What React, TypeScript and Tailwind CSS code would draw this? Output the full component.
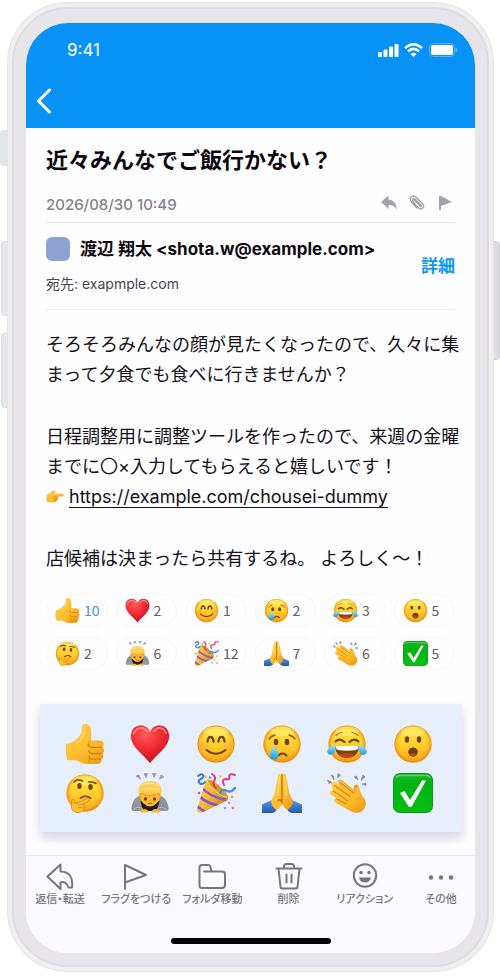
import React from "react";

type IconProps = { className?: string };

const FONT = "font-[Inter,'Noto_Sans_CJK_JP',sans-serif]";

/* Shared gradients used by every emoji drawing */
function EmojiDefs() {
  return (
    <svg className="absolute size-0" aria-hidden="true">
      <defs>
        <linearGradient id="face" x1="0" y1="0" x2="0" y2="1">
          <stop offset="0" stopColor="#ffe64f" />
          <stop offset="0.5" stopColor="#ffd02f" />
          <stop offset="1" stopColor="#f7a61b" />
        </linearGradient>
        <radialGradient id="rim" cx="0.5" cy="0.5" r="0.5">
          <stop offset="0.78" stopColor="#f08a0c" stopOpacity="0" />
          <stop offset="1" stopColor="#e97d08" stopOpacity="0.75" />
        </radialGradient>
        <linearGradient id="skin" x1="0" y1="0" x2="1" y2="1">
          <stop offset="0" stopColor="#ffcf4a" />
          <stop offset="0.6" stopColor="#fdbb2c" />
          <stop offset="1" stopColor="#ec9413" />
        </linearGradient>
        <radialGradient id="heart" cx="0.4" cy="0.25" r="0.75">
          <stop offset="0" stopColor="#ff5a5a" />
          <stop offset="0.55" stopColor="#ec2a32" />
          <stop offset="1" stopColor="#c8101c" />
        </radialGradient>
        <linearGradient id="tear" x1="0" y1="0" x2="0" y2="1">
          <stop offset="0" stopColor="#9fe3fb" />
          <stop offset="1" stopColor="#1b9be0" />
        </linearGradient>
        <linearGradient id="check" x1="0" y1="0" x2="0" y2="1">
          <stop offset="0" stopColor="#18b32b" />
          <stop offset="0.3" stopColor="#00b512" />
          <stop offset="1" stopColor="#05c00f" />
        </linearGradient>
        <linearGradient id="cone" x1="0" y1="0" x2="1" y2="0.4">
          <stop offset="0" stopColor="#f9d24c" />
          <stop offset="0.5" stopColor="#f3bb38" />
          <stop offset="1" stopColor="#c98a18" />
        </linearGradient>
        <linearGradient id="sleeve" x1="0" y1="0" x2="0" y2="1">
          <stop offset="0" stopColor="#5b9ae8" />
          <stop offset="1" stopColor="#2159a8" />
        </linearGradient>
        <clipPath id="coneClip">
          <path d="M10 7 Q13 5 19 9 L32 23 Q33 28 28 29 L6 39.500 Q.5 41 1 36 Z" />
        </clipPath>
      </defs>
    </svg>
  );
}

function Emoji({ className, children }: { className?: string; children: React.ReactNode }) {
  return (
    <svg viewBox="0 0 40 40" className={className} fill="none" aria-hidden="true">
      {children}
    </svg>
  );
}

function FaceBase() {
  return (
    <>
      <circle cx="20" cy="20" r="18.6" fill="url(#face)" />
      <circle cx="20" cy="20" r="18.6" fill="url(#rim)" />
      <ellipse cx="20" cy="7.5" rx="12" ry="5" fill="#fff27a" opacity="0.5" />
    </>
  );
}

function ThumbsUp({ className }: IconProps) {
  return (
    <Emoji className={className}>
      <path d="M1 20 Q6 19.5 10 16.5 Q15.500 12 17 8 V3 Q17.500 0 21 0 Q25 .5 26 5.500 Q26.800 10 25.500 16.500 H35 Q38.800 17 38.800 20 Q38.800 22 37.500 23 Q39.500 24.500 39 27 Q38.800 28.800 37.300 29.500 Q38.800 31 38.200 33 Q37.800 34.800 36 35.200 Q37 37 35.500 38.800 Q34.500 40 31 40 H21 Q16 39.500 12 36.500 L2 36 Q0 28 1 20Z" fill="url(#skin)" />
      <path d="M36.500 23.300 H26 Q23.500 23 23.500 20.500 M36.500 29.500 H26 Q23.800 29 24 26.500 M35.500 35.200 H26 Q23.800 34.800 24.300 32.500" stroke="#d08210" strokeWidth="1.3" strokeLinecap="round" />
      <path d="M25.500 16.500 Q22.500 17.500 22.800 21 M25 39.500 Q22.800 38.500 23.800 36" stroke="#dc9418" strokeWidth="1" strokeLinecap="round" />
      <path d="M19.500 3 V9 Q18 14 12 18.500" stroke="#ffe082" strokeWidth="1.600" strokeLinecap="round" opacity="0.7" />
    </Emoji>
  );
}

function Heart({ className }: IconProps) {
  return (
    <Emoji className={className}>
      <path d="M20 39 Q17.500 36 9 27.500 Q.8 19.500 .8 11.500 Q1.500 2 10.500 1.300 Q17.500 1.500 20 8 Q22.500 1.500 29.500 1.300 Q38.500 2 39.200 11.500 Q39.200 19.500 31 27.500 Q22.500 36 20 39Z" fill="url(#heart)" />
      <path d="M4 9.500 Q6 4 11 3.800 Q15 4 17 7.500 M24 7 Q26.500 3.800 29.500 3.800 Q34 4.200 36 9" stroke="#ff9c9c" strokeWidth="1.800" strokeLinecap="round" opacity="0.75" />
    </Emoji>
  );
}

function Smile({ className }: IconProps) {
  return (
    <Emoji className={className}>
      <FaceBase />
      <circle cx="8" cy="22.500" r="4" fill="#fb8a35" opacity="0.3" />
      <circle cx="32" cy="22.500" r="4" fill="#fb8a35" opacity="0.3" />
      <path d="M11.500 17.500 Q12.200 12.800 14.500 12.800 Q17 12.800 17.500 17.500 M22.500 17.500 Q23 12.800 25.500 12.800 Q28 12.800 28.500 17.500" stroke="#70430b" strokeWidth="2.300" strokeLinecap="round" />
      <path d="M10.500 26 Q20 33.500 29.500 26" stroke="#70430b" strokeWidth="2" strokeLinecap="round" />
    </Emoji>
  );
}

function Crying({ className }: IconProps) {
  return (
    <Emoji className={className}>
      <FaceBase />
      <ellipse cx="14" cy="18" rx="2.300" ry="3.300" fill="#70430b" />
      <ellipse cx="25" cy="18" rx="2.300" ry="3.300" fill="#70430b" />
      <path d="M7 15 Q9 12 13 11 M27 11 Q31 12 33 15" stroke="#94580b" strokeWidth="1.500" strokeLinecap="round" />
      <path d="M16.500 31.500 Q20.500 27.500 24.500 31.500" stroke="#70430b" strokeWidth="2" strokeLinecap="round" />
      <path d="M12 22 Q17 28.500 16.500 31.500 Q16 35.500 12 35.500 Q8 35.500 7.500 31.500 Q7.500 28 12 22Z" fill="url(#tear)" />
    </Emoji>
  );
}

function Joy({ className }: IconProps) {
  return (
    <Emoji className={className}>
      <FaceBase />
      <path d="M8.500 17.500 Q13 13.500 17.500 18 M22.500 18 Q27 13.500 31.500 17.500" stroke="#70430b" strokeWidth="2" strokeLinecap="round" />
      <path d="M9 11.500 Q12 8.500 15 8.500 M25 8.500 Q28 8.500 31 11.500" stroke="#b77413" strokeWidth="1.200" strokeLinecap="round" />
      <path d="M8 22 H32 Q31 34 20 34 Q9 34 8 22Z" fill="#7c420c" />
      <path d="M8.500 22 H31.500 Q31.200 25.500 29 26 Q20 27.500 11 26 Q8.800 25.500 8.500 22Z" fill="#fff" />
      <path d="M12.500 31 Q20 27.500 27.500 31 Q25 34 20 34 Q15 34 12.500 31Z" fill="#e5502c" opacity="0.6" />
      <path d="M8.500 21 Q9 27 6.500 29.500 Q3.500 32 1 29.500 Q-.8 27 1.500 24.500 Q4 22 8.500 21Z" fill="url(#tear)" />
      <path d="M31.500 21 Q31 27 33.500 29.500 Q36.500 32 39 29.500 Q40.800 27 38.500 24.500 Q36 22 31.500 21Z" fill="url(#tear)" />
    </Emoji>
  );
}

function Surprised({ className }: IconProps) {
  return (
    <Emoji className={className}>
      <FaceBase />
      <ellipse cx="14" cy="15.500" rx="2.200" ry="3.300" fill="#70430b" />
      <ellipse cx="26" cy="15.500" rx="2.200" ry="3.300" fill="#70430b" />
      <ellipse cx="20" cy="28" rx="4.800" ry="4.600" fill="#704010" />
      <path d="M16.200 30.500 Q20 27.500 23.800 30.500 Q22 32.800 20 32.600 Q17.800 32.600 16.200 30.500Z" fill="#a9501f" />
    </Emoji>
  );
}

function Thinking({ className }: IconProps) {
  return (
    <Emoji className={className}>
      <FaceBase />
      <ellipse cx="14.500" cy="13" rx="2.200" ry="3" fill="#70430b" />
      <ellipse cx="25.500" cy="14" rx="2.200" ry="3" fill="#70430b" />
      <path d="M9 9 Q12 5.500 17.500 8 M23.500 9 Q27.500 8.200 31 10.500" stroke="#8b500b" strokeWidth="1.700" strokeLinecap="round" />
      <path d="M15.500 25 Q20.500 21.500 25.500 25" stroke="#70430b" strokeWidth="1.700" strokeLinecap="round" />
      <path d="M7 27 Q9 24.500 9.500 28 L10 31 L22.500 25.500 Q25.500 25.500 23.500 28 L17.500 31 Q20 31.500 19.500 33.500 Q19.500 38 14 39.500 Q7 39.500 6.500 34Z" fill="#ffc334" stroke="#d98a13" strokeWidth="0.900" strokeLinejoin="round" />
      <path d="M13.500 32 L17.500 31 M13.500 34.500 L19 33.800" stroke="#d98a13" strokeWidth="0.900" strokeLinecap="round" />
    </Emoji>
  );
}

function Bowing({ className }: IconProps) {
  return (
    <Emoji className={className}>
      <path d="M11 22 Q4 24 2 32 Q.5 37.500 3 38 H14 L12 32 L28 32 L26 38 H37 Q39.500 37.500 38 32 Q36 24 29 22Z" fill="#92949b" />
      <path d="M10.500 28 H29.500 L27 38 H13Z" fill="#1d1e24" />
      <path d="M4 36 Q9 32.500 13 36 M36 36 Q31 32.500 27 36" stroke="#b8bac0" strokeWidth="1" />
      <path d="M10 20 Q9.500 27 13 30 Q16.500 33.500 20 33.500 Q23.500 33.500 27 30 Q30.500 27 30 20Z" fill="#ffb829" />
      <path d="M9 25 Q5.500 8.500 20 8 Q34.500 8.500 31 25 Q29.500 23 29 20.500 Q20 24.500 11 20.500 Q10.500 23 9 25Z" fill="#ffcb52" />
      <path d="M11.500 12.500 Q20 8 28.500 12.500 M10.500 17 Q20 14 29.500 17" stroke="#ffe08c" strokeWidth="1.500" />
      <path d="M9 25 Q10.500 23 11 20.500 Q20 24.500 29 20.500 Q29.500 23 31 25" stroke="#dd8d17" strokeWidth="0.900" />
      <ellipse cx="15.500" cy="26" rx="1.500" ry="1.800" fill="#5f390c" />
      <ellipse cx="24.500" cy="26" rx="1.500" ry="1.800" fill="#5f390c" />
      <path d="M18.300 30.500 H21.700" stroke="#9c5a12" strokeWidth="1" strokeLinecap="round" />
      <path d="M10 38.500 Q10 36 14 36 Q18.500 36 18.500 39.500 H11Z M30 38.500 Q30 36 26 36 Q21.500 36 21.500 39.500 H29Z" fill="#ffb52e" />
      <path d="M6 3 L9 2 L10.500 6Z M14 .5 L17.500 .5 L16 4.500Z M22.500 .5 L26 .5 L24 4.500Z M31 2 L34 4 L29.500 6Z" fill="#9a9ca3" stroke="#9a9ca3" strokeWidth="0.800" />
    </Emoji>
  );
}

function Party({ className }: IconProps) {
  return (
    <Emoji className={className}>
      <path d="M10 7 Q13 5 19 9 L32 23 Q33 28 28 29 L6 39.500 Q.5 41 1 36 Z" fill="url(#cone)" />
      <g clipPath="url(#coneClip)" stroke="#8f4fd6" strokeWidth="2.600">
        <path d="M5 14 Q14 24 30 27 M3 23 Q11 31 25 33 M0 32 Q5 37 12 40" />
      </g>
      <path d="M11.500 7.500 Q12 12 20 18.500 Q28 25 32 24 Q31 19 23 12.500 Q15 6 11.500 7.500Z" fill="#d39a2a" />
      <path d="M11.500 7.500 Q12 12 20 18.500 Q28 25 32 24" stroke="#ffe48a" strokeWidth="0.900" />
      <path d="M2 3 Q6 -.5 7.500 3 Q7.500 5 4.500 6 Q1 8.500 4 10.500 Q7 12 9 9" stroke="#347bd8" strokeWidth="2" strokeLinecap="round" />
      <path d="M16 1 Q21 4 18 8 Q16 12 20 15" stroke="#e9385d" strokeWidth="2" strokeLinecap="round" />
      <path d="M39 2 Q34 0 33 3 Q35 7 30 6 Q25 6 28 12" stroke="#e9387d" strokeWidth="2" strokeLinecap="round" />
      <path d="M24 20 Q26 15 31 18 Q35 20 39 15" stroke="#4389e6" strokeWidth="2.300" strokeLinecap="round" />
      <path d="M9 2 L11.500 4 L9 5Z M23 2 L26 3 L24 5Z" fill="#f2b632" />
      <circle cx="14" cy="4.500" r="1.300" fill="#3f9de8" />
      <circle cx="3" cy="20" r="1.300" fill="#e94878" />
      <circle cx="36" cy="24" r="1.400" fill="#f2a64b" />
      <circle cx="37" cy="35" r="1.400" fill="#ef8480" />
      <circle cx="29" cy="35" r="1.300" fill="#75b6e8" />
      <circle cx="33" cy="30" r="1.200" fill="#eb77a2" />
    </Emoji>
  );
}

function Pray({ className }: IconProps) {
  return (
    <Emoji className={className}>
      <path d="M10 27 L0 31.500 V40 H10 Q14 39 15 36Z M30 27 L40 31.500 V40 H30 Q26 39 25 36Z" fill="url(#sleeve)" />
      <path d="M19.500 1 Q17 -.5 16 3 L12.500 21 L9 28 Q9.500 34 14.500 37 Q18 35 20 31 Q22 35 25.500 37 Q30.500 34 31 28 L27.500 21 L24 3 Q23 -.5 20.500 1 L20 2Z" fill="url(#skin)" />
      <path d="M20 2 V30 M20 29 Q17.500 25 16 28" stroke="#bd7411" strokeWidth="1.400" strokeLinecap="round" />
      <path d="M17.700 4 L15.500 22 M22.300 4 L24.500 22" stroke="#ffe07a" strokeWidth="1.200" strokeLinecap="round" />
    </Emoji>
  );
}

function Clap({ className }: IconProps) {
  return (
    <Emoji className={className}>
      <path d="M11 8 Q13 5.500 16 8 L27 17 Q26 12 29 11.500 Q31 11.500 32 15 Q33 21 38 27 Q41 34 33 38.500 L20 32Z" fill="#e99d1a" />
      <path d="M5 13 Q3 9.500 6 8.500 Q8 8 10 10 L22 19 L12 10.500 Q11 7.500 14 7.500 L28 18.500 Q28 14 30.500 14 Q33 15 33.500 21 L38 29 Q39.500 35 33.500 39 Q28 41 22.500 37.500 L9 30 Q6 28 7.500 26 Q8.500 25 11 26.500 L4.500 22 Q2 20 3.500 18 Q5 17 7 18 L4.500 15.500Z" fill="url(#skin)" />
      <path d="M7.500 12.500 L23 23.500 M6.500 18 L21 28 M10 26 L19 31 M13 9.500 L27 20" stroke="#d58914" strokeWidth="1.200" strokeLinecap="round" />
      <path d="M.5 7 L4.500 9 L2 10.500Z M4 2 L6.500 3 L7 7Z M11 .5 L13.500 2 L10.500 5Z M27 4 L29.500 3 L31 7Z M36 2 L38 4 L34 7.500Z M35 11 L39 10 L39 12.500Z" fill="#85878e" stroke="#85878e" strokeWidth="0.600" />
    </Emoji>
  );
}

function CheckBox({ className }: IconProps) {
  return (
    <Emoji className={className}>
      <rect x="0" y="0" width="40" height="40" rx="7" fill="#119326" />
      <rect x="1" y="1" width="38" height="38" rx="6" fill="url(#check)" />
      <path d="M3 5 Q3.500 2.500 7 2.500 H33 Q36.500 2.500 37 5" stroke="#7bd884" strokeWidth="1.300" opacity="0.8" />
      <path d="M7 20 L11.500 18 L17 27 L29 7.500 H33 L18.500 34 H16Z" fill="#fff" />
    </Emoji>
  );
}

function PointRight({ className }: IconProps) {
  return (
    <Emoji className={className}>
      <path d="M1 18 Q8 14 14 9 Q18 6 21 9 Q22 12 18 15 H37 Q40 16 39.500 18.500 Q39 21 36 21 H26 Q28 23 26 25 Q27 28 24.500 29.500 Q25 33 20 34 H8 Q4 33 1 32Z" fill="url(#skin)" />
      <path d="M26 21 H18 M25.500 25.500 H18 M24 30 H18" stroke="#cf8011" strokeWidth="1.500" strokeLinecap="round" />
    </Emoji>
  );
}

const reactions = [
  { name: "いいね", Icon: ThumbsUp, count: 10, mine: true },
  { name: "ハート", Icon: Heart, count: 2 },
  { name: "笑顔", Icon: Smile, count: 1 },
  { name: "泣き顔", Icon: Crying, count: 2 },
  { name: "うれし泣き", Icon: Joy, count: 3 },
  { name: "驚き", Icon: Surprised, count: 5 },
  { name: "考え中", Icon: Thinking, count: 2 },
  { name: "お辞儀", Icon: Bowing, count: 6 },
  { name: "お祝い", Icon: Party, count: 12 },
  { name: "お願い", Icon: Pray, count: 7 },
  { name: "拍手", Icon: Clap, count: 6 },
  { name: "完了", Icon: CheckBox, count: 5 },
];

const line = {
  fill: "none",
  stroke: "currentColor",
  strokeWidth: 2,
  strokeLinejoin: "round" as const,
  strokeLinecap: "round" as const,
};

const tools = [
  {
    label: "返信・転送",
    icon: <path {...line} d="M14.500 1.500 L1.500 13.500 L14.500 26 V19.500 Q20 17.500 22.500 24.500 H26 Q28 9 14.500 8.500Z" />,
  },
  {
    label: "フラグをつける",
    icon: <path {...line} d="M3 26 V2 L24 12 L3 19.500" />,
  },
  {
    label: "フォルダ移動",
    icon: <path {...line} d="M6 8.500 H24 Q27 8.500 27 11.500 V22 Q27 25 24 25 H4 Q1.500 25 1.500 22.500 V4.500 Q1.500 2 4 2 H10.500 Q12 2 12.500 4 L13.500 8.500" />,
  },
  {
    label: "削除",
    icon: (
      <g {...line}>
        <path d="M1.500 5.500 H26.500 M3.500 5.500 L5.500 24 Q5.700 25.500 7 25.500 H21 Q22.300 25.500 22.500 24 L24.500 5.500 M9 5 V3.500 Q9 1 11.500 1 H16.500 Q19 1 19 3.500 V5" />
        <path d="M11.500 11.500 V19.500 M16.500 11.500 V19.500" />
      </g>
    ),
  },
  {
    label: "リアクション",
    icon: (
      <g>
        <circle {...line} cx="14" cy="12.500" r="11.200" />
        <circle cx="10" cy="9.500" r="1.700" fill="currentColor" />
        <circle cx="18" cy="9.500" r="1.700" fill="currentColor" />
        <path d="M8 14.500 H20 Q19 19.500 14 19.500 Q9 19.500 8 14.500Z" fill="currentColor" />
      </g>
    ),
  },
  {
    label: "その他",
    icon: (
      <g fill="currentColor">
        <circle cx="4" cy="14.500" r="2.200" />
        <circle cx="14" cy="14.500" r="2.200" />
        <circle cx="24" cy="14.500" r="2.200" />
      </g>
    ),
  },
];

function StatusBar() {
  return (
    <div className="flex h-[54px] items-center justify-between pr-[18px] pl-[41px]">
      <time className="text-[17px] leading-5">9:41</time>
      <svg viewBox="0 0 80 16" className="h-4 w-20" fill="none" aria-label="電波・Wi-Fi・電池">
        <g fill="#fff">
          <rect x="1" y="10" width="4" height="5" rx="1" />
          <rect x="6.500" y="7.500" width="4" height="7.500" rx="1" />
          <rect x="12" y="4.500" width="4" height="10.500" rx="1" />
          <rect x="17.500" y="2" width="4" height="13" rx="1" />
        </g>
        <g stroke="#fff" strokeWidth="2.500">
          <path d="M28 6.200 Q36.500 -1.600 45 6.200" />
          <path d="M31 9.400 Q36.500 4.400 42 9.400" />
        </g>
        <path d="M33.500 12 Q36.500 9.500 39.500 12 L36.500 15Z" fill="#fff" />
        <rect x="52.500" y="1.500" width="25" height="13" rx="4" stroke="#5db5f8" />
        <rect x="54" y="3" width="22" height="10" rx="2" fill="#fff" />
        <path d="M79 6 Q80 8 79 10Z" fill="#5db5f8" stroke="#5db5f8" />
      </svg>
    </div>
  );
}

function MessageHeader() {
  return (
    <header>
      <h1 className="pt-[15px] text-[22px] leading-[34px] font-bold text-[#0c080d]">近々みんなでご飯行かない？</h1>
      <div className="mt-[2px] flex h-11 items-center justify-between border-b border-[#e8e2ea] pt-[14px] pr-[2px] pb-[6px]">
        <time className="text-[15px] leading-[22px] font-medium text-[#878287]">2026/08/30 10:49</time>
        <div className="flex items-center gap-3 pb-1 text-[#a5a3aa]">
          <button aria-label="返信" className="block">
            <svg viewBox="0 0 16 16" className="size-4" fill="currentColor">
              <path d="M0 7 L7.500 .5 V4.500 Q15 5 16 14.500 Q12.500 9.500 7.500 10 V14Z" />
            </svg>
          </button>
          <button aria-label="添付ファイル" className="block">
            <svg viewBox="0 0 16 16" className="size-4" fill="none" stroke="currentColor" strokeWidth="1.400" strokeLinecap="round">
              <path d="M4.500 7.500 L9.500 13 Q11.500 14.800 13.500 13.200 Q15.600 11.500 14 9.300 L6.800 2 Q4.500 0 2.200 2 Q.2 4 2 6.500 L8 13 M12 11.800 L4.500 4 M6 9 L3.500 5.500 Q3.500 3.300 5.800 3.800 L12.500 10.500" />
            </svg>
          </button>
          <button aria-label="フラグ" className="block">
            <svg viewBox="0 0 16 16" className="size-4" fill="currentColor">
              <path d="M2 1 H4 L15 7 L4 11 V15 H2Z" />
            </svg>
          </button>
        </div>
      </div>
      <div className="flex items-center justify-between border-b border-[#eceaf2] py-[14px]">
        <div>
          <div className="flex items-center gap-[10px]">
            <span className="size-6 shrink-0 rounded-md bg-[#8da1d2]" />
            <span className="text-[17px] leading-6 font-bold whitespace-nowrap text-[#0c080d]">
              渡辺 翔太 &lt;shota.w@example.com&gt;
            </span>
          </div>
          <p className="mt-3 text-[14px] leading-[22px] text-[#48454d]">宛先: exapmple.com</p>
        </div>
        <button className="text-[17px] leading-6 font-bold whitespace-nowrap text-[#0d96f5]">詳細</button>
      </div>
    </header>
  );
}

function MessageBody() {
  return (
    <div className="-mr-2 flex flex-col gap-8 pt-5 text-[18px] leading-[30px] text-[#151116]">
      <p>
        そろそろみんなの顔が見たくなったので、久々に集
        <br />
        まって夕食でも食べに行きませんか？
      </p>
      <p>
        日程調整用に調整ツールを作ったので、来週の金曜
        <br />
        までに〇×入力してもらえると嬉しいです！
        <br />
        <PointRight className="mr-[5px] inline-block size-[18px] align-[-2px]" />
        <a href="#chousei" className="underline underline-offset-4">https://example.com/chousei-dummy</a>
      </p>
      <p>店候補は決まったら共有するね。 よろしく〜！</p>
    </div>
  );
}

function ReactionCounts() {
  return (
    <div className="-mr-2 mt-5 grid grid-cols-6 gap-y-[10px] font-['Noto_Sans_CJK_JP',sans-serif]">
      {reactions.map(({ name, Icon, count, mine }) => (
        <button
          key={name}
          aria-label={`${name} ${count}`}
          className="mr-2 flex h-[33px] items-center gap-1 rounded-full border border-[#f9f8fc] pl-2 text-[14px] text-[#5f5c61]"
        >
          <Icon className="size-[25px] shrink-0" />
          <span className={mine ? "text-[#4793d2]" : ""}>{count}</span>
        </button>
      ))}
    </div>
  );
}

function ReactionPicker() {
  return (
    <div className="mt-[34px] -mr-[7px] -ml-[6px] grid grid-cols-6 gap-y-[9px] bg-[#e7effc] pt-5 pr-4 pb-[19px] pl-3 shadow-[0_6px_10px_rgba(70,70,110,0.22)]">
      {reactions.map(({ name, Icon }) => (
        <button key={name} aria-label={name} className="flex justify-center">
          <Icon className="size-10" />
        </button>
      ))}
    </div>
  );
}

function Toolbar() {
  return (
    <nav className="mt-[23px] border-t border-[#e6e6ec] bg-[#fbfaff]">
      <div className="-mx-1 grid grid-cols-6 pt-[7px]">
        {tools.map(({ label, icon }) => (
          <button key={label} className="flex flex-col items-center text-[#77757f]">
            <svg viewBox="0 0 28 28" className="size-7" aria-hidden="true">
              {icon}
            </svg>
            <span className="text-[11px] leading-4 font-medium whitespace-nowrap [font-feature-settings:'palt']">{label}</span>
          </button>
        ))}
      </div>
      <div className="flex justify-center pt-[31px] pb-[9px]">
        <span className="h-[6px] w-40 rounded-full bg-black" />
      </div>
    </nav>
  );
}

export default function App() {
  return (
    <div className={`relative bg-white pt-[2px] pr-[6px] pb-1 pl-[7px] ${FONT}`}>
      <EmojiDefs />
      <span className="absolute top-[130px] left-0 h-9 w-2 rounded-l bg-[#e2e6e8]" />
      <span className="absolute top-[241px] left-[1px] h-[75px] w-2 rounded-l border border-[#d5dfe1] bg-[#e5eaeb]" />
      <span className="absolute top-[333px] left-[1px] h-[75px] w-2 rounded-l border border-[#d5dfe1] bg-[#e5eaeb]" />
      <span className="absolute top-[241px] right-0 h-[119px] w-2 rounded-r border border-[#d0d0d4] bg-[#dedde0]" />
      <div className="relative rounded-[60px] border border-[#e4e4e7] bg-[#efeef0] p-1">
        <div className="rounded-[56px] border-2 border-[#dddce0] bg-[#e7e5e9] px-3 pt-[14px] pb-3">
          <div className="overflow-hidden rounded-[42px] bg-[#fefdff]">
            <div className="bg-[#0892f6] text-white">
              <StatusBar />
              <div className="flex h-[51px] items-center pb-1 pl-[10px]">
                <button aria-label="戻る" className="block">
                  <svg viewBox="0 0 16 26" className="h-[26px] w-4" fill="none" stroke="#fff" strokeWidth="3" strokeLinecap="round" strokeLinejoin="round">
                    <path d="M13.500 2 L2.500 13 L13.500 24" />
                  </svg>
                </button>
              </div>
            </div>
            <main className="px-5">
              <MessageHeader />
              <MessageBody />
              <ReactionCounts />
              <ReactionPicker />
            </main>
            <Toolbar />
          </div>
        </div>
      </div>
    </div>
  );
}
